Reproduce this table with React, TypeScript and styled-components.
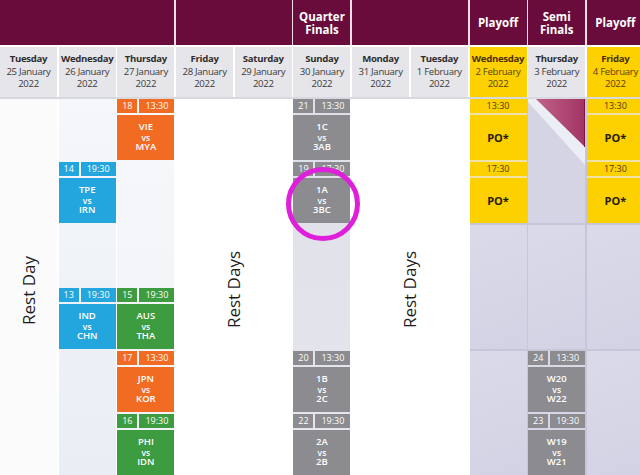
import styled, { createGlobalStyle, css } from 'styled-components'

const GlobalStyle = createGlobalStyle`
  html, body {
    margin: 0;
    padding: 0;
    background: #fff;
  }
  body {
    font-family: 'Open Sans', 'Liberation Sans', sans-serif;
  }
`

const columns = css`
  display: grid;
  grid-template-columns: repeat(11, 57px);
  column-gap: 1.7px;
`

type Place = { $col: number; $span?: number; $row?: number; $rows?: number }

const placed = css<Place>`
  grid-column: ${({ $col, $span = 1 }) => `${$col} / span ${$span}`};
  grid-row: ${({ $row, $rows }) => ($row ? `${$row} / span ${$rows ?? 1}` : '1 / -1')};
`

const Page = styled.div`
  width: 640px;
  height: 475px;
  overflow: hidden;
  background: #fff;
`

const Sheet = styled.div`
  width: 644px;
  display: flex;
  flex-direction: column;
`

const StageBar = styled.div`
  ${columns}
  height: 45px;
  margin-bottom: 2px;
  background: #eedfe6;
`

const StageCell = styled.div<{ $span: number }>`
  grid-column: span ${({ $span }) => $span};
  background: #690c3b;
  color: #fff;
  font-weight: 700;
  font-size: 11.5px;
  line-height: 13px;
  white-space: pre-line;
  text-align: center;
  display: flex;
  align-items: center;
  justify-content: center;
`

const DayRow = styled.div`
  ${columns}
  height: 50px;
  border-bottom: 2px solid #d8d8e0;
`

const DayCell = styled.div<{ $final?: boolean }>`
  background: ${({ $final }) => ($final ? '#fdd000' : '#e6e6ea')};
  color: ${({ $final }) => ($final ? '#5a4208' : '#3a3a3c')};
  display: flex;
  flex-direction: column;
  align-items: center;
  justify-content: center;
  font-size: 9.6px;
  letter-spacing: -0.3px;
  line-height: 12.5px;
  white-space: nowrap;

  b {
    font-weight: 700;
    color: ${({ $final }) => ($final ? '#4a3000' : '#2e2e30')};
  }
`

const Body = styled.div`
  ${columns}
  grid-template-rows: repeat(6, 61px);
  row-gap: 2px;
  position: relative;
`

const Lane = styled.div<Place & { $bg: string }>`
  ${placed}
  background: ${({ $bg }) => $bg};
`

const RestLabel = styled.div<Place>`
  ${placed}
  display: flex;
  align-items: center;
  justify-content: center;
  padding-top: 6px;

  span {
    writing-mode: vertical-rl;
    transform: rotate(180deg);
    font-size: 17px;
    color: #1c1c1c;
  }
`

const PoolCell = styled.div<Place>`
  ${placed}
  background: linear-gradient(160deg, #dadae8, #d2d2e4);
`

const tones = {
  orange: '#f26b22',
  blue: '#23a6dd',
  green: '#3d9b40',
  gray: '#8b8b90',
}

type Tone = keyof typeof tones

const MatchBox = styled.div<Place>`
  ${placed}
  display: flex;
  flex-direction: column;
  gap: 2px;
  color: #fff;
`

const MatchHead = styled.div`
  display: flex;
  gap: 2px;
  height: 14px;
  font-size: 9px;
  line-height: 14px;
  text-align: center;
`

const NumTag = styled.div<{ $tone: Tone }>`
  width: 20px;
  background: ${({ $tone }) => tones[$tone]};
`

const TimeTag = styled.div<{ $tone: Tone }>`
  flex: 1;
  background: ${({ $tone }) => tones[$tone]};
`

const Teams = styled.div<{ $tone: Tone }>`
  flex: 1;
  background: ${({ $tone }) => tones[$tone]};
  display: flex;
  flex-direction: column;
  align-items: center;
  justify-content: center;
  font-size: 9.5px;
  font-weight: 600;
  line-height: 10.5px;

  small {
    font-size: 8.5px;
    line-height: 9.5px;
  }
`

const FinalsBlock = styled.div<Place>`
  ${placed}
  display: flex;
  flex-direction: column;
  gap: 2px;
  background: #efe2a6;
`

const FinalsTime = styled.div`
  height: 14px;
  background: #fdd000;
  color: #4d3a08;
  font-size: 9px;
  line-height: 14px;
  text-align: center;
`

const FinalsSlot = styled.div`
  flex: 1;
  background: #fdd000;
  color: #231c00;
  font-size: 11px;
  font-weight: 700;
  display: flex;
  align-items: center;
  justify-content: center;
`

const Curl = styled.div<Place>`
  ${placed}
  background: #d4d4e4;
  overflow: visible;

  svg {
    display: block;
    width: 100%;
    height: 100%;
  }
`

const Ring = styled.div`
  position: absolute;
  left: 286px;
  top: 68px;
  width: 64px;
  height: 64px;
  border: 5px solid #de20da;
  border-radius: 50%;
  pointer-events: none;
`

const stages = [
  { span: 3, label: '' },
  { span: 2, label: '' },
  { span: 1, label: 'Quarter\nFinals' },
  { span: 2, label: '' },
  { span: 1, label: 'Playoff' },
  { span: 1, label: 'Semi\nFinals' },
  { span: 1, label: 'Playoff' },
]

const days = [
  { name: 'Tuesday', date: '25 January' },
  { name: 'Wednesday', date: '26 January' },
  { name: 'Thursday', date: '27 January' },
  { name: 'Friday', date: '28 January' },
  { name: 'Saturday', date: '29 January' },
  { name: 'Sunday', date: '30 January' },
  { name: 'Monday', date: '31 January' },
  { name: 'Tuesday', date: '1 February' },
  { name: 'Wednesday', date: '2 February', final: true },
  { name: 'Thursday', date: '3 February' },
  { name: 'Friday', date: '4 February', final: true },
]

const lanes = [
  { col: 1, bg: '#fbfbfc' },
  { col: 2, bg: 'linear-gradient(180deg, #f5f7fa, #e9eef5)' },
  { col: 3, bg: 'linear-gradient(180deg, #f7f8fb, #eff2f7)' },
  { col: 6, bg: 'linear-gradient(180deg, #dfdfe9, #e6e6ee)' },
  { col: 9, span: 3, bg: '#c6c6d8' },
]

const rests = [
  { col: 1, span: 1, label: 'Rest Day' },
  { col: 4, span: 2, label: 'Rest Days' },
  { col: 7, span: 2, label: 'Rest Days' },
]

const pools = [
  { col: 9, row: 3 },
  { col: 9, row: 5 },
  { col: 10, row: 3 },
  { col: 10, row: 5 },
  { col: 11, row: 3 },
  { col: 11, row: 5 },
]

const matches: { col: number; row: number; num: number; time: string; home: string; away: string; tone: Tone }[] = [
  { col: 3, row: 1, num: 18, time: '13:30', home: 'VIE', away: 'MYA', tone: 'orange' },
  { col: 2, row: 2, num: 14, time: '19:30', home: 'TPE', away: 'IRN', tone: 'blue' },
  { col: 2, row: 4, num: 13, time: '19:30', home: 'IND', away: 'CHN', tone: 'blue' },
  { col: 3, row: 4, num: 15, time: '19:30', home: 'AUS', away: 'THA', tone: 'green' },
  { col: 3, row: 5, num: 17, time: '13:30', home: 'JPN', away: 'KOR', tone: 'orange' },
  { col: 3, row: 6, num: 16, time: '19:30', home: 'PHI', away: 'IDN', tone: 'green' },
  { col: 6, row: 1, num: 21, time: '13:30', home: '1C', away: '3AB', tone: 'gray' },
  { col: 6, row: 2, num: 19, time: '17:30', home: '1A', away: '3BC', tone: 'gray' },
  { col: 6, row: 5, num: 20, time: '13:30', home: '1B', away: '2C', tone: 'gray' },
  { col: 6, row: 6, num: 22, time: '19:30', home: '2A', away: '2B', tone: 'gray' },
  { col: 10, row: 5, num: 24, time: '13:30', home: 'W20', away: 'W22', tone: 'gray' },
  { col: 10, row: 6, num: 23, time: '19:30', home: 'W19', away: 'W21', tone: 'gray' },
]

const App = () => {
  return (
    <Page>
      <GlobalStyle />
      <Sheet>
        <StageBar>
          {stages.map((s, i) => (
            <StageCell key={i} $span={s.span}>
              {s.label}
            </StageCell>
          ))}
        </StageBar>

        <DayRow>
          {days.map((d, i) => (
            <DayCell key={i} $final={d.final}>
              <b>{d.name}</b>
              <span>{d.date}</span>
              <span>2022</span>
            </DayCell>
          ))}
        </DayRow>

        <Body>
          {lanes.map((l, i) => (
            <Lane key={i} $col={l.col} $span={l.span} $bg={l.bg} />
          ))}
          {rests.map((r, i) => (
            <RestLabel key={i} $col={r.col} $span={r.span}>
              <span>{r.label}</span>
            </RestLabel>
          ))}
          {pools.map((p, i) => (
            <PoolCell key={i} $col={p.col} $row={p.row} $rows={2} />
          ))}

          {[9, 11].map((col) => (
            <FinalsBlock key={col} $col={col} $row={1} $rows={2}>
              <FinalsTime>13:30</FinalsTime>
              <FinalsSlot>PO*</FinalsSlot>
              <FinalsTime>17:30</FinalsTime>
              <FinalsSlot>PO*</FinalsSlot>
            </FinalsBlock>
          ))}

          <Curl $col={10} $row={1} $rows={2}>
            <svg viewBox="0 0 57 124" preserveAspectRatio="none">
              <defs>
                <linearGradient id="flap" x1="0" y1="0" x2="1" y2="0">
                  <stop offset="0" stopColor="#c06288" />
                  <stop offset="1" stopColor="#a23464" />
                </linearGradient>
              </defs>
              <polygon points="0,0 8,0 57,48 57,66 0,3" fill="#eceef5" />
              <polygon points="8,0 57,0 57,48" fill="url(#flap)" />
              <line x1="56.5" y1="0" x2="56.5" y2="48" stroke="#7e1540" strokeWidth="1" />
            </svg>
          </Curl>

          {matches.map((m) => (
            <MatchBox key={m.num} $col={m.col} $row={m.row}>
              <MatchHead>
                <NumTag $tone={m.tone}>{m.num}</NumTag>
                <TimeTag $tone={m.tone}>{m.time}</TimeTag>
              </MatchHead>
              <Teams $tone={m.tone}>
                <span>{m.home}</span>
                <small>vs</small>
                <span>{m.away}</span>
              </Teams>
            </MatchBox>
          ))}

          <Ring />
        </Body>
      </Sheet>
    </Page>
  )
}

export default App
